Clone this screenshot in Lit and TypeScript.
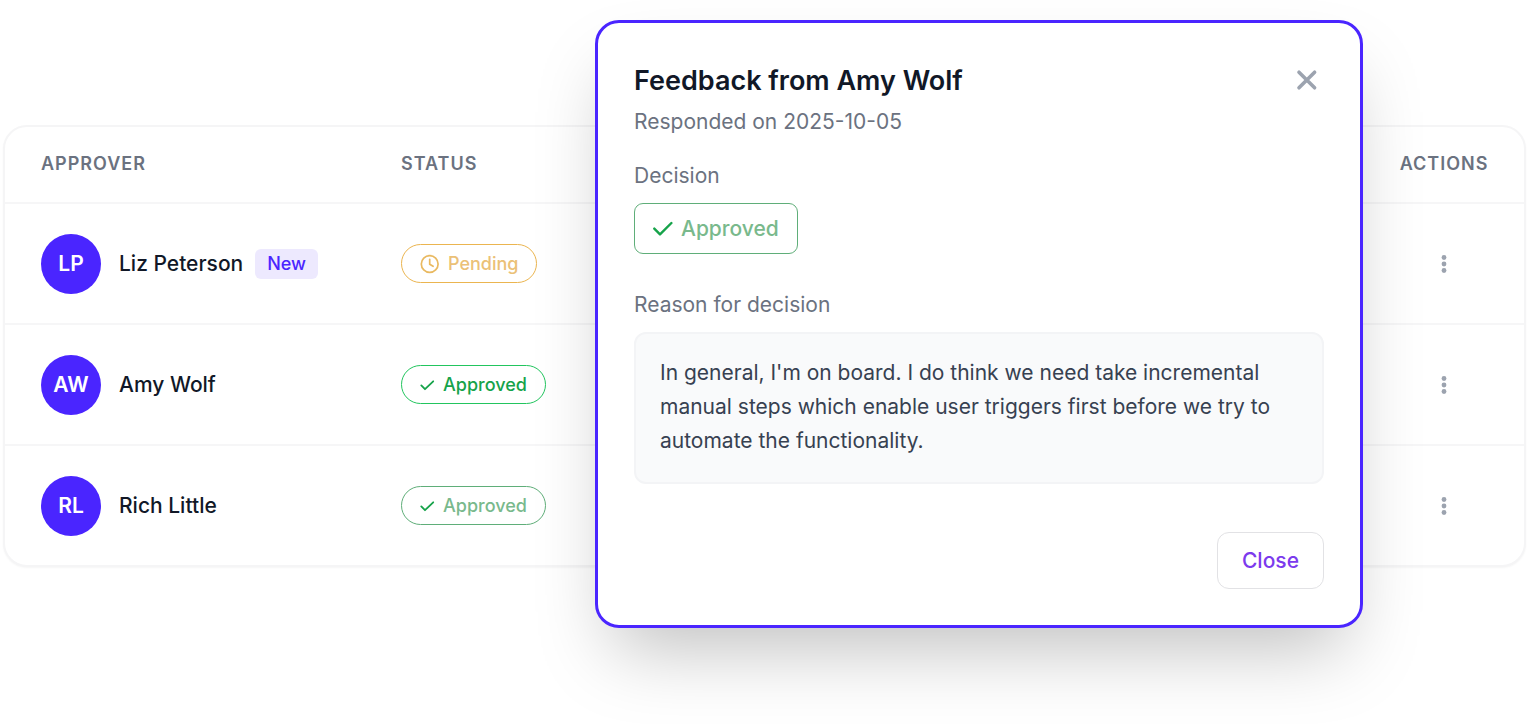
import { LitElement, html, css, nothing } from "lit";
import { customElement, property } from "lit/decorators.js";

type Status = "pending" | "approved" | "approved-muted";

interface Approver {
  initials: string;
  name: string;
  isNew?: boolean;
  status: Status;
}

const approvers: Approver[] = [
  { initials: "LP", name: "Liz Peterson", isNew: true, status: "pending" },
  { initials: "AW", name: "Amy Wolf", status: "approved" },
  { initials: "RL", name: "Rich Little", status: "approved-muted" },
];

@customElement("status-pill")
class StatusPill extends LitElement {
  @property() status: Status = "pending";

  static styles = css`
    :host {
      display: inline-flex;
      vertical-align: middle;
    }
    .pill {
      display: inline-flex;
      align-items: center;
      box-sizing: border-box;
      height: 39px;
      padding: 0 18px;
      border: 1px solid #ebb550;
      border-radius: 20px;
      font-size: 18px;
      font-weight: 500;
      line-height: 24px;
      color: #ebc177;
    }
    .approved {
      border-color: #22c55e;
      color: #16a34a;
    }
    .approved-muted {
      border-color: #5fae79;
      color: #79b98c;
    }
    svg {
      fill: none;
      stroke-linecap: round;
      stroke-linejoin: round;
    }
    .clock {
      width: 20px;
      height: 20px;
      margin-right: 8px;
      stroke: #e9b960;
    }
    .check {
      width: 16px;
      height: 16px;
      margin-right: 7px;
      stroke: #16a34a;
    }
  `;

  render() {
    const pending = this.status === "pending";
    return html`<span class="pill ${this.status}">
      ${pending
        ? html`<svg class="clock" viewBox="0 0 20 20" stroke-width="1.7" aria-hidden="true">
            <circle cx="9.7" cy="10" r="8.4" /><path d="M9.7 5.3v5l3.4 2" />
          </svg>`
        : html`<svg class="check" viewBox="0 0 16 16" stroke-width="1.8" aria-hidden="true">
            <path d="M1.3 8.4L5 12.2L13.2 4.3" />
          </svg>`}
      ${pending ? "Pending" : "Approved"}
    </span>`;
  }
}

@customElement("approver-table")
class ApproverTable extends LitElement {
  static styles = css`
    :host {
      display: block;
    }
    .card {
      border: 2px solid #f5f5f6;
      border-radius: 24px;
      background: #fff;
      box-shadow: 0 1px 2px rgba(0, 0, 0, 0.04);
    }
    table {
      width: 100%;
      border-collapse: separate;
      border-spacing: 0;
      table-layout: fixed;
    }
    .col-approver {
      width: 360px;
    }
    .col-actions {
      width: 160px;
    }
    th {
      height: 75px;
      box-sizing: border-box;
      padding: 0 36px 2px;
      text-align: left;
      font-size: 18px;
      line-height: 24px;
      font-weight: 600;
      letter-spacing: 1px;
      text-transform: uppercase;
      color: #6b7280;
    }
    td {
      height: 121px;
      box-sizing: border-box;
      padding: 0 36px;
      border-top: 2px solid #f6f6f7;
      vertical-align: middle;
    }
    .actions {
      text-align: center;
      white-space: nowrap;
      padding-left: 0;
      padding-right: 0;
    }
    .person {
      display: flex;
      align-items: center;
    }
    .avatar {
      display: flex;
      align-items: center;
      justify-content: center;
      width: 60px;
      height: 60px;
      margin-right: 18px;
      border-radius: 50%;
      background: #4a25ff;
      color: #fff;
      font-size: 21px;
      font-weight: 600;
    }
    .name {
      font-size: 21px;
      font-weight: 500;
      line-height: 30px;
      white-space: nowrap;
      color: #111827;
    }
    .new {
      margin-left: 12px;
      padding: 0 12px;
      border-radius: 6px;
      background: #ede9fe;
      color: #4a25ff;
      font-size: 18px;
      font-weight: 500;
      line-height: 30px;
    }
    .menu {
      display: inline-flex;
      padding: 6px;
      border: 0;
      background: none;
      color: #9ca3af;
      vertical-align: middle;
    }
    .menu svg {
      width: 24px;
      height: 24px;
      fill: currentColor;
    }
  `;

  render() {
    return html`<div class="card">
      <table>
        <colgroup>
          <col class="col-approver" />
          <col />
          <col class="col-actions" />
        </colgroup>
        <thead>
          <tr>
            <th scope="col">Approver</th>
            <th scope="col">Status</th>
            <th scope="col" class="actions">Actions</th>
          </tr>
        </thead>
        <tbody>
          ${approvers.map(
            (a) => html`<tr>
              <td>
                <div class="person">
                  <span class="avatar">${a.initials}</span>
                  <span class="name">${a.name}</span>
                  ${a.isNew ? html`<span class="new">New</span>` : nothing}
                </div>
              </td>
              <td><status-pill .status=${a.status}></status-pill></td>
              <td class="actions">
                <button class="menu" type="button" aria-label="Actions for ${a.name}">
                  <svg viewBox="0 0 24 24" aria-hidden="true">
                    <circle cx="12" cy="5.5" r="2.4" />
                    <circle cx="12" cy="12" r="2.4" />
                    <circle cx="12" cy="18.5" r="2.4" />
                  </svg>
                </button>
              </td>
            </tr>`
          )}
        </tbody>
      </table>
    </div>`;
  }
}

@customElement("feedback-dialog")
class FeedbackDialog extends LitElement {
  static styles = css`
    :host {
      display: block;
    }
    .panel {
      padding: 36px;
      border: 3px solid #4a25ff;
      border-radius: 24px;
      background: #fff;
      box-shadow: 0 38px 75px -18px rgba(0, 0, 0, 0.25);
      font-size: 21px;
      line-height: 30px;
      color: #6b7280;
    }
    .head {
      display: flex;
      align-items: center;
      justify-content: space-between;
    }
    h2 {
      margin: 0;
      font-size: 27px;
      line-height: 44px;
      font-weight: 600;
      color: #111827;
    }
    .dismiss {
      display: flex;
      padding: 0;
      border: 0;
      background: none;
      color: #9ca3af;
    }
    .dismiss svg {
      width: 36px;
      height: 36px;
      fill: none;
      stroke: currentColor;
      stroke-width: 3.6;
      stroke-linecap: round;
    }
    p {
      margin: 0;
    }
    .date {
      margin-top: 4px;
    }
    .label {
      margin-top: 24px;
    }
    .label-reason {
      margin-top: 36px;
    }
    .decision {
      display: flex;
      align-items: center;
      width: fit-content;
      height: 51px;
      box-sizing: border-box;
      margin-top: 12px;
      padding: 0 18px;
      border: 1px solid #5fae79;
      border-radius: 9px;
      font-weight: 500;
      color: #79b98c;
    }
    .decision svg {
      width: 20px;
      height: 20px;
      margin-right: 8px;
      fill: none;
      stroke: #16a34a;
      stroke-width: 2.4;
      stroke-linecap: round;
      stroke-linejoin: round;
    }
    .reason {
      margin-top: 12px;
      padding: 22px 24px 24px;
      border: 2px solid #f3f4f6;
      border-radius: 12px;
      background: #f9fafb;
      color: #374151;
      line-height: 34px;
    }
    .foot {
      display: flex;
      justify-content: flex-end;
      margin-top: 48px;
    }
    .close {
      box-sizing: border-box;
      height: 57px;
      padding: 0 24px;
      border: 1px solid #e2e2e5;
      border-radius: 12px;
      background: #fff;
      font: inherit;
      font-weight: 500;
      color: #7c3aed;
    }
  `;

  render() {
    return html`<section class="panel" role="dialog" aria-labelledby="title">
      <header class="head">
        <h2 id="title">Feedback from Amy Wolf</h2>
        <button class="dismiss" type="button" aria-label="Dismiss">
          <svg viewBox="0 0 36 36" aria-hidden="true"><path d="M11 9.2l15.6 15.6M26.6 9.2l-15.6 15.6" /></svg>
        </button>
      </header>
      <p class="date">Responded on 2025-10-05</p>
      <p class="label">Decision</p>
      <div class="decision">
        <svg viewBox="0 0 20 20" aria-hidden="true"><path d="M1.3 9.6L7 15.4L18.4 4" /></svg>
        Approved
      </div>
      <p class="label label-reason">Reason for decision</p>
      <p class="reason">
        In general, I'm on board. I do think we need take incremental manual steps which enable
        user triggers first before we try to automate the functionality.
      </p>
      <footer class="foot">
        <button class="close" type="button">Close</button>
      </footer>
    </section>`;
  }
}

@customElement("app-root")
class AppRoot extends LitElement {
  static styles = css`
    :host {
      display: block;
      position: relative;
      box-sizing: border-box;
      min-height: 100vh;
      padding: 125px 3px 0;
      overflow: hidden;
      background: #fff;
      font-family: Inter, "Liberation Sans", sans-serif;
    }
    .overlay {
      position: absolute;
      top: 20px;
      right: 166px;
      width: 768px;
    }
  `;

  render() {
    return html`
      <approver-table></approver-table>
      <feedback-dialog class="overlay"></feedback-dialog>
    `;
  }
}
